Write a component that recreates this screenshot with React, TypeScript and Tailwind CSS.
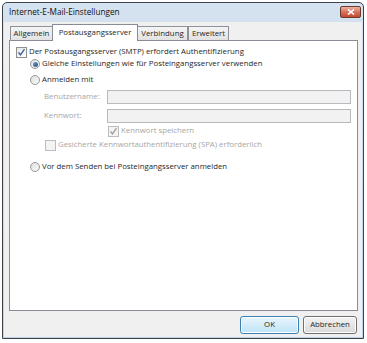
import React from 'react';

const Check: React.FC<{ checked?: boolean; disabled?: boolean }> = ({ checked, disabled }) => (
  <span className={`w-[11px] h-[11px] border flex items-center justify-center shrink-0 ${disabled ? 'border-[#bcbcbc] bg-[#f4f4f4]' : 'border-[#8e8f8f] bg-gradient-to-br from-[#e6e6e6] to-white'}`}>
    {checked && (
      <svg width="9" height="9" viewBox="0 0 9 9">
        <path d="M1.5 4.5 L3.5 6.8 L7.5 1.2" fill="none" stroke={disabled ? '#a0a0a0' : '#3e5f98'} strokeWidth="1.4" />
      </svg>
    )}
  </span>
);

const Radio: React.FC<{ checked?: boolean }> = ({ checked }) => (
  <span className="w-[10px] h-[10px] rounded-full border border-[#979797] bg-gradient-to-br from-[#dedede] to-[#fbfbfb] flex items-center justify-center shrink-0">
    {checked && <span className="w-[5px] h-[5px] rounded-full bg-gradient-to-br from-[#6f9fd4] to-[#1f4f8a]" />}
  </span>
);

const tabs = [
  { label: 'Allgemein', w: 'w-[43px]' },
  { label: 'Postausgangsserver', w: 'w-[86px]' },
  { label: 'Verbindung', w: 'w-[51px]' },
  { label: 'Erweitert', w: 'w-[41px]' },
];

export default function App() {
  return (
    <div className="w-[367px] h-[343px] bg-white pl-[2px] pt-[2px] text-[7.8px] text-[#262626]" style={{ fontFamily: '"Open Sans", "Noto Sans", sans-serif' }}>
      <div className="w-[362px] h-[337px] border border-[#3c4248] rounded-t-[5px] bg-gradient-to-b from-[#d5e2f0] to-[#bed3ea] flex flex-col px-px pb-px">
        {/* title bar */}
        <div className="h-[19px] flex items-start justify-between pl-[5px] pr-[1px]">
          <span className="text-[8.2px] text-[#111] mt-[3px]">Internet-E-Mail-Einstellungen</span>
          <div className="w-[21px] h-[12px] mt-[3px] rounded-[2px] border border-[#6e3a30] bg-gradient-to-b from-[#eab3a2] via-[#d6735c] to-[#c4472f] flex items-center justify-center">
            <svg width="8" height="6" viewBox="0 0 8 6">
              <path d="M1 0.5 L7 5.5 M7 0.5 L1 5.5" stroke="white" strokeWidth="1.6" />
            </svg>
          </div>
        </div>
        {/* client */}
        <div className="flex-1 bg-[#f0f0f0] flex flex-col pl-[5px] pr-[4px] pt-px">
          <div className="flex items-end h-[17px] pl-px">
            {tabs.map((t, i) => (
              <div
                key={t.label}
                className={
                  i === 1
                    ? `${t.w} h-[17px] bg-white border border-b-0 border-[#898c95] flex items-center justify-center relative -mb-px z-10 -ml-px`
                    : `${t.w} h-[14px] bg-gradient-to-b from-[#f5f5f5] to-[#e2e2e2] border border-b-0 border-[#8e9199] flex items-center justify-center ${i === 2 ? '-ml-px' : ''}`
                }
              >
                {t.label}
              </div>
            ))}
          </div>
          <div className="h-[271px] bg-white border border-[#898c95] pl-[6px] pr-[6px] pt-[5px] flex flex-col">
            <div className="flex items-center gap-[2px] h-[12px]">
              <Check checked />
              <span>Der Postausgangsserver (SMTP) erfordert Authentifizierung</span>
            </div>
            <div className="pl-[14px] flex flex-col">
              <div className="flex items-center gap-[2px] h-[12px]">
                <Radio checked />
                <span>Gleiche Einstellungen wie für Posteingangsserver verwenden</span>
              </div>
              <div className="flex items-center gap-[2px] h-[12px] mt-[4px]">
                <Radio />
                <span>Anmelden mit</span>
              </div>
              <div className="pl-[14px] text-[#a6a6a6] flex flex-col">
                <div className="flex items-center h-[14px] mt-[4px]">
                  <span className="w-[63px]">Benutzername:</span>
                  <div className="flex-1 h-[14px] border border-[#b7bbbf] bg-[#f2f2f2]" />
                </div>
                <div className="flex items-center h-[14px] mt-[5px]">
                  <span className="w-[63px]">Kennwort:</span>
                  <div className="flex-1 h-[14px] border border-[#b7bbbf] bg-[#f2f2f2]" />
                </div>
                <div className="flex items-center gap-[2px] h-[12px] mt-[2px] pl-[64px]">
                  <Check checked disabled />
                  <span>Kennwort speichern</span>
                </div>
                <div className="flex items-center gap-[2px] h-[12px] mt-[2px] pl-px">
                  <Check disabled />
                  <span>Gesicherte Kennwortauthentifizierung (SPA) erforderlich</span>
                </div>
              </div>
              <div className="flex items-center gap-[2px] h-[12px] mt-[10px]">
                <Radio />
                <span>Vor dem Senden bei Posteingangsserver anmelden</span>
              </div>
            </div>
          </div>
          <div className="flex justify-end gap-[4px] pt-[5px] pr-px">
            <button className="w-[59px] h-[18px] rounded-[3px] border border-[#3c7fb1] bg-gradient-to-b from-[#eaf6fd] to-[#bee3f6] shadow-[inset_0_0_0_1px_#ffffff] text-[7.8px] text-[#262626]">OK</button>
            <button className="w-[54px] h-[18px] rounded-[3px] border border-[#707070] bg-gradient-to-b from-[#f3f3f3] to-[#dadada] shadow-[inset_0_0_0_1px_#ffffff] text-[7.8px] text-[#262626]">Abbrechen</button>
          </div>
        </div>
      </div>
    </div>
  );
}
